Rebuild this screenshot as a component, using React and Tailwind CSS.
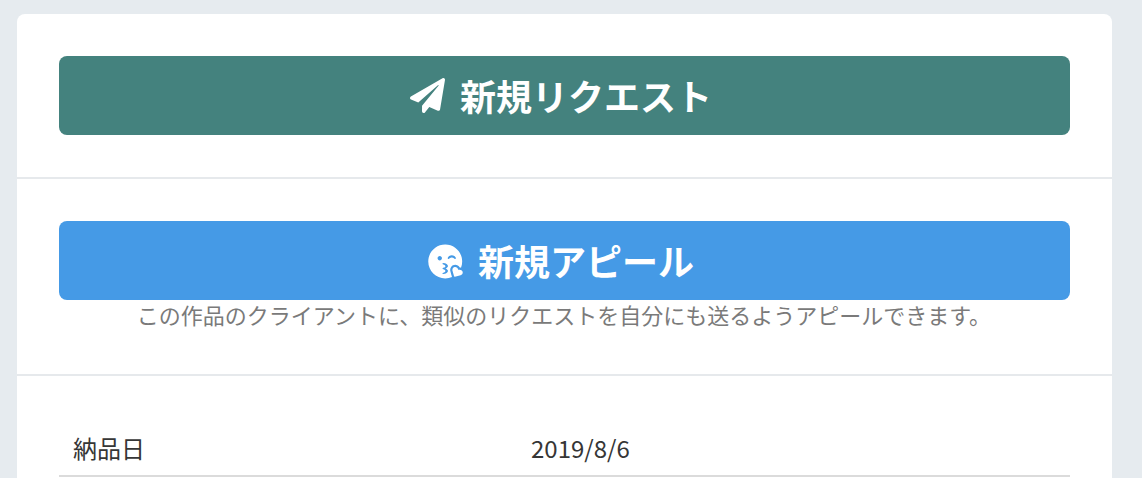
import { FaPaperPlane, FaKissWinkHeart } from "react-icons/fa";

export default function App() {
  return (
    <div className="flex h-screen overflow-hidden bg-[#e6ebef] pl-[17px] pr-[30px] pt-[14px] font-['Noto_Sans_CJK_JP',sans-serif]">
      <main className="flex flex-1 flex-col rounded-t-lg bg-white">
        <section className="h-[165px] shrink-0 border-b-2 border-[#e6e9ec] px-[42px] pt-[42px]">
          <button className="flex h-[79px] w-full items-center justify-center gap-[15px] rounded-lg bg-[#44827e] pr-[7px] text-[36px] leading-none font-bold text-white">
            <FaPaperPlane className="size-[35px]" />
            <span className="pb-[2px]">新規リクエスト</span>
          </button>
        </section>
        <section className="h-[197px] shrink-0 border-b-2 border-[#e6e9ec] px-[42px] pt-[42px]">
          <button className="flex h-[79px] w-full items-center justify-center gap-[15px] rounded-lg bg-[#459ae6] pr-[7px] text-[36px] leading-none font-bold text-white">
            <FaKissWinkHeart className="mt-[2px] size-[35px]" />
            <span className="pb-[2px]">新規アピール</span>
          </button>
          <p className="pr-px text-center text-[22px] leading-[28px] text-[#7a7a7a]">この作品のクライアントに、類似のリクエストを自分にも送るようアピールできます。</p>
        </section>
        <section className="px-[42px] pt-[42px]">
          <dl className="flex h-[59px] items-end border-b-2 border-[#dbdbdb] px-[14px] pb-[9px] text-[24px] leading-[36px] text-[#363636]">
            <dt className="w-[458px]">納品日</dt>
            <dd>2019/8/6</dd>
          </dl>
        </section>
      </main>
    </div>
  );
}
